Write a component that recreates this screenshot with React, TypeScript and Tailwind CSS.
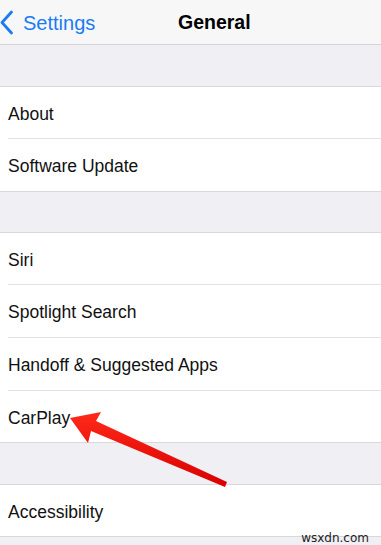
import React from 'react';

const font = { fontFamily: '"Liberation Sans", Arial, sans-serif' };

function Row({ label, h, last }: { label: string; h: string; last?: boolean }) {
    return (
        <div className={`flex items-center bg-white pl-2 ${h}`}>
            <div
                className={`flex h-full flex-1 items-center pt-[3px] text-[17.5px] text-[#111] ${last ? '' : 'border-b border-[#e2e2e5]'}`}
            >
                {label}
            </div>
        </div>
    );
}

export default function App() {
    return (
        <div className="relative h-[545px] w-[381px] overflow-hidden bg-[#efeff4]" style={font}>
            {/* Nav bar */}
            <div className="relative flex h-[45px] items-center border-b border-[#d4d4d8] bg-[#f7f7f8]">
                <div className="flex items-center gap-[9px] pt-[1px] text-[20px] text-[#1a7cf4]">
                    <svg width="14" height="25" viewBox="0 0 14 25">
                        <path d="M11.5 2 L2 12.5 L11.5 23" fill="none" stroke="#1a7cf4" strokeWidth="2.8" strokeLinecap="round" strokeLinejoin="round" />
                    </svg>
                    <span>Settings</span>
                </div>
                <div className="absolute left-[178px] top-0 flex h-full items-center pt-[1px] text-[19.5px] font-bold text-black">
                    General
                </div>
            </div>

            <div className="h-[42px] border-b border-[#d8d8dc]" />

            <div className="border-b border-[#d8d8dc]">
                <Row label="About" h="h-[52px]" />
                <Row label="Software Update" h="h-[52px]" last />
            </div>

            <div className="h-[41px] border-b border-[#d8d8dc]" />

            <div className="border-b border-[#d8d8dc]">
                <Row label="Siri" h="h-[52px]" />
                <Row label="Spotlight Search" h="h-[53px]" />
                <Row label="Handoff & Suggested Apps" h="h-[53px]" />
                <Row label="CarPlay" h="h-[51px]" last />
            </div>

            <div className="h-[42px] border-b border-[#d8d8dc]" />

            <div className="border-b border-[#d8d8dc]">
                <Row label="Accessibility" h="h-[51px]" last />
            </div>

            {/* Red arrow */}
            <svg className="absolute left-0 top-0" width="381" height="545" viewBox="0 0 381 545">
                <defs>
                    <linearGradient id="ar" x1="0" y1="0" x2="0" y2="1">
                        <stop offset="0" stopColor="#ff2a1a" />
                        <stop offset="1" stopColor="#d80000" />
                    </linearGradient>
                </defs>
                <path
                    d="M70 418 L101 412 L96 421 L227 482 L225 487 L91 431 L88 443 Z"
                    fill="url(#ar)"
                />
            </svg>

            <div className="absolute bottom-[1px] right-[12px] text-[12px] leading-none text-[#222]" style={{ fontFamily: '"DejaVu Sans", sans-serif' }}>
                wsxdn.com
            </div>
        </div>
    );
}
